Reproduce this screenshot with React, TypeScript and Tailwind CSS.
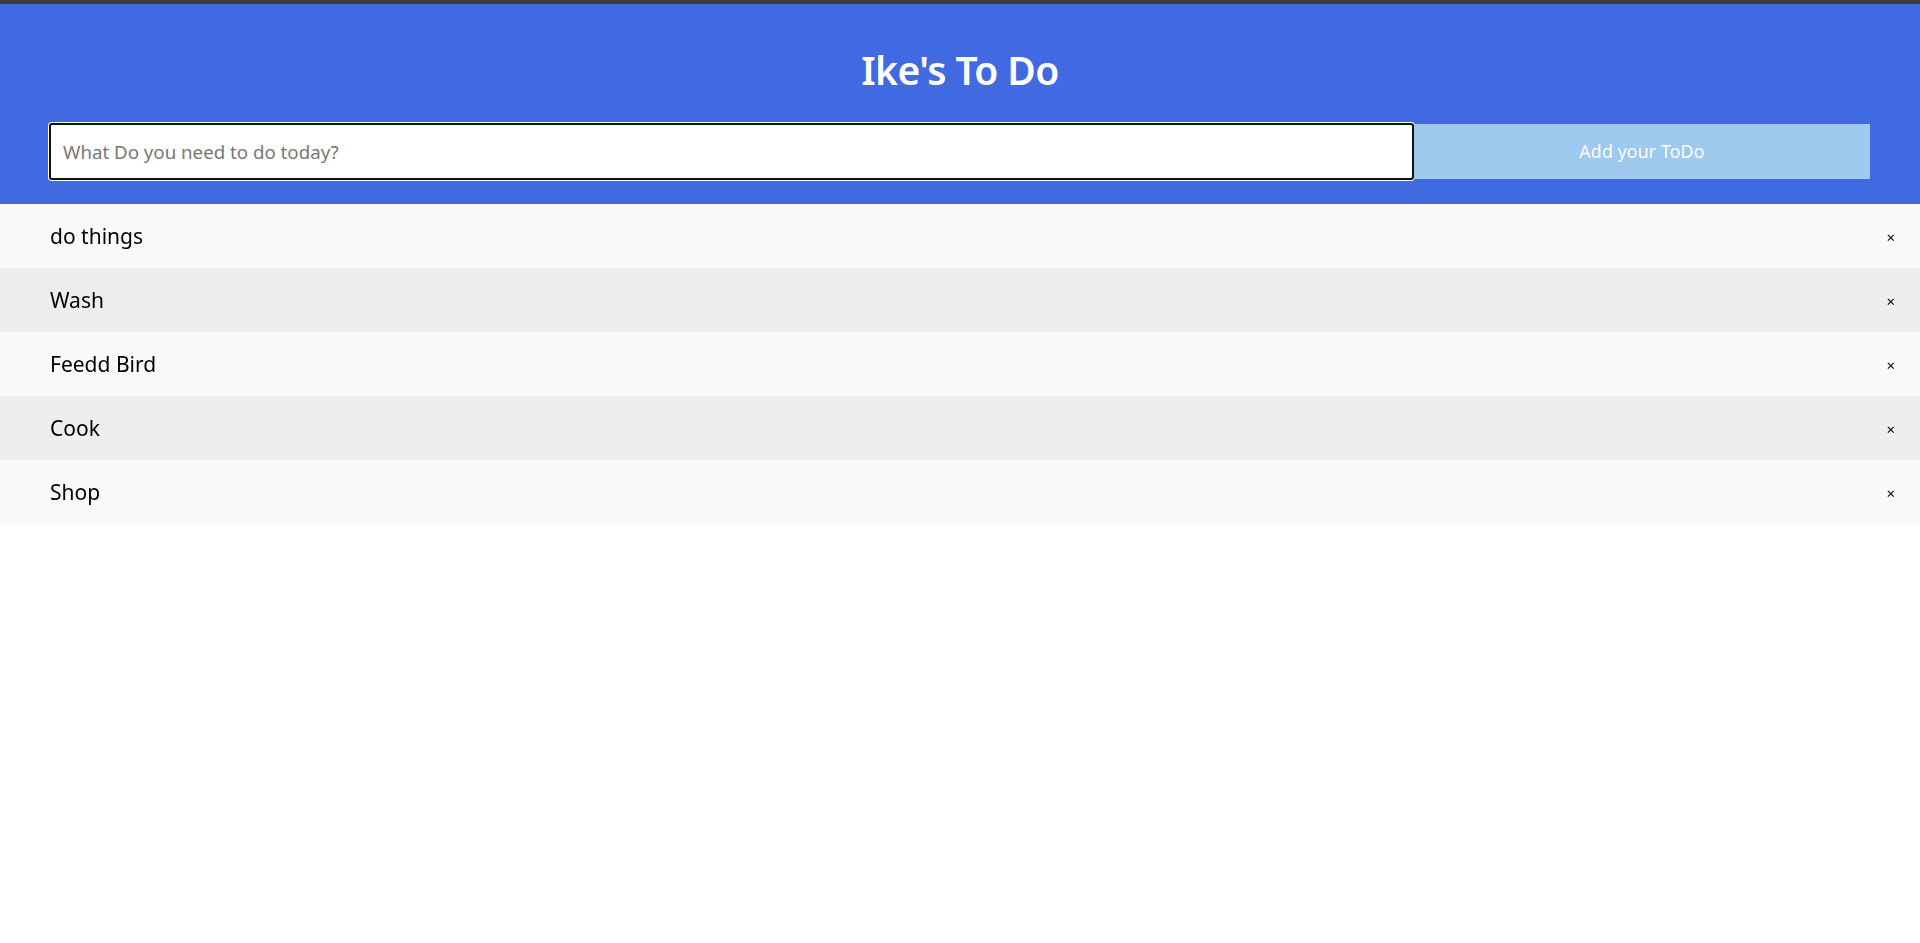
import { useState } from "react";

const INITIAL = ["do things", "Wash", "Feedd Bird", "Cook", "Shop"];

export default function App() {
  const [todos, setTodos] = useState<string[]>(INITIAL);
  const [text, setText] = useState("");

  function add() {
    if (!text.trim()) return;
    setTodos([...todos, text.trim()]);
    setText("");
  }

  function remove(i: number) {
    setTodos(todos.filter((_, idx) => idx !== i));
  }

  return (
    <div className="min-h-screen bg-white font-['Noto_Sans',sans-serif]">
      <div className="h-[4px] bg-[#3c3c3c]" />
      <header className="h-[200px] bg-[#4169e1] pt-[42px]">
        <h1 className="text-center text-[39px] leading-[48px] font-semibold text-white tracking-[-0.6px]">
          Ike&apos;s To Do
        </h1>
        <form
          className="mt-[29px] ml-[49px] flex w-[1821px]"
          onSubmit={(e) => {
            e.preventDefault();
            add();
          }}
        >
          <input
            autoFocus
            value={text}
            onChange={(e) => setText(e.target.value)}
            placeholder="What Do you need to do today?"
            className="h-[57px] w-[1365px] rounded-[3px] border-2 border-[#111] bg-white px-[12px] text-[18.7px] text-black outline-none ring-1 ring-white placeholder:text-[#777]"
          />
          <button
            type="submit"
            className="mt-px h-[55px] flex-1 bg-[#a0c9f0] text-[18px] text-white"
          >
            Add your ToDo
          </button>
        </form>
      </header>
      <ul>
        {todos.map((t, i) => (
          <li
            key={i}
            className={`flex h-[64px] items-center justify-between pl-[50px] pr-[25px] text-[21px] text-black ${
              i % 2 === 0 ? "bg-[#f9f9f9]" : "bg-[#eeeeee]"
            }`}
          >
            <span className="pt-[2px]">{t}</span>
            <button
              type="button"
              onClick={() => remove(i)}
              className="pt-[2px] text-[15px] leading-none text-black"
            >
              ×
            </button>
          </li>
        ))}
      </ul>
    </div>
  );
}
